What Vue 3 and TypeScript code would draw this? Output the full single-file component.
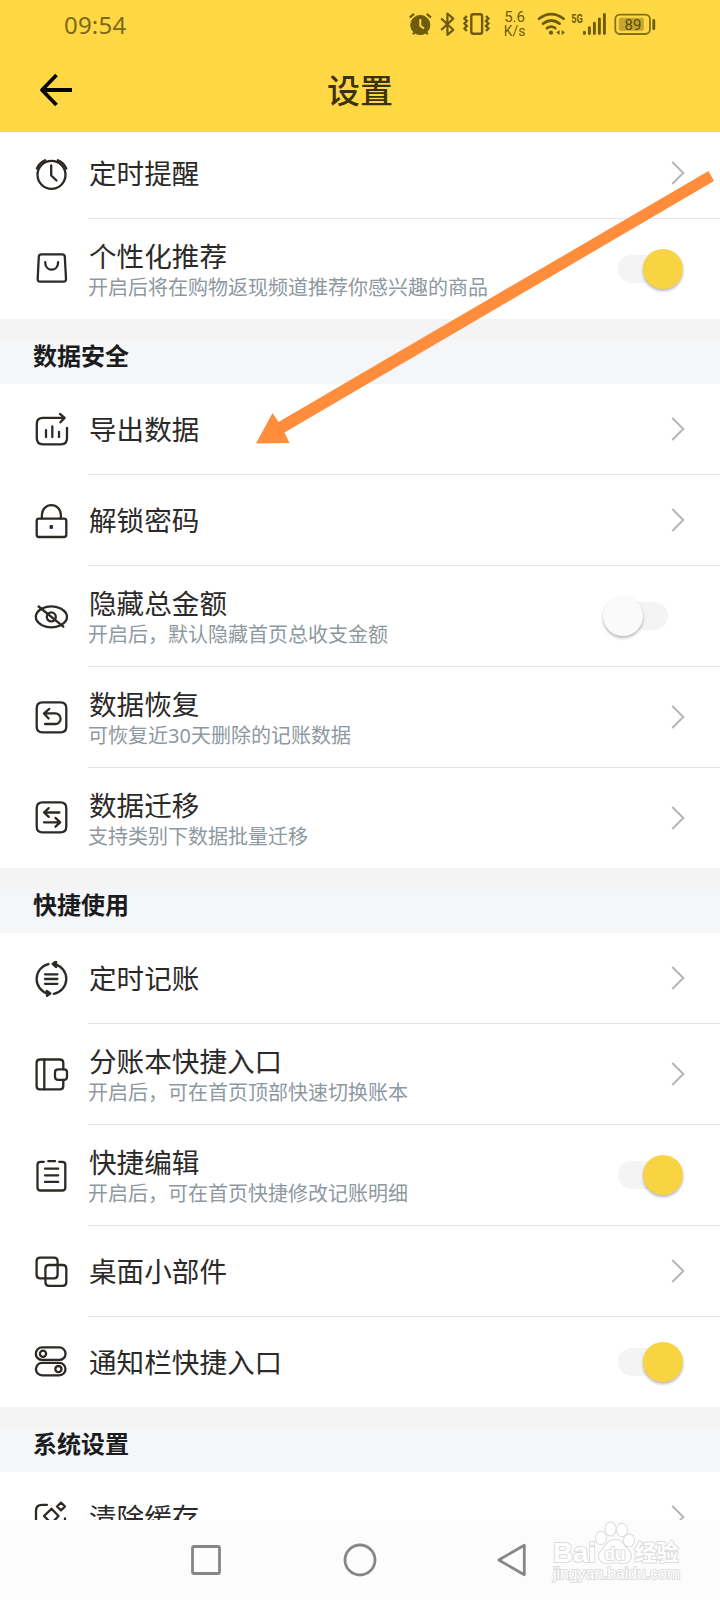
<script setup lang="ts">
type Control = 'link' | 'on' | 'off'

interface Item {
  icon: string
  title: string
  note?: string
  control: Control
}

interface Group {
  heading?: string
  items: Item[]
}

const groups: Group[] = [
  {
    items: [
      { icon: 'clock', title: '定时提醒', control: 'link' },
      { icon: 'bag', title: '个性化推荐', note: '开启后将在购物返现频道推荐你感兴趣的商品', control: 'on' },
    ],
  },
  {
    heading: '数据安全',
    items: [
      { icon: 'export', title: '导出数据', control: 'link' },
      { icon: 'lock', title: '解锁密码', control: 'link' },
      { icon: 'eye', title: '隐藏总金额', note: '开启后，默认隐藏首页总收支金额', control: 'off' },
      { icon: 'restore', title: '数据恢复', note: '可恢复近30天删除的记账数据', control: 'link' },
      { icon: 'migrate', title: '数据迁移', note: '支持类别下数据批量迁移', control: 'link' },
    ],
  },
  {
    heading: '快捷使用',
    items: [
      { icon: 'cycle', title: '定时记账', control: 'link' },
      { icon: 'wallet', title: '分账本快捷入口', note: '开启后，可在首页顶部快速切换账本', control: 'link' },
      { icon: 'clipboard', title: '快捷编辑', note: '开启后，可在首页快捷修改记账明细', control: 'on' },
      { icon: 'widgets', title: '桌面小部件', control: 'link' },
      { icon: 'toggles', title: '通知栏快捷入口', control: 'on' },
    ],
  },
  {
    heading: '系统设置',
    items: [{ icon: 'clear', title: '清除缓存', control: 'link' }],
  },
]

const icons: Record<string, string[]> = {
  clock: [
    'M3.5 19.3a14 14 0 1 0 28 0a14 14 0 1 0 -28 0',
    'M17.2 10V20L22.5 25',
    'M2.9 13Q5.2 7.4 11.2 4.8',
    'M32.3 13Q29.9 7.4 23.9 4.8',
  ],
  bag: [
    'M7.3 3.8H28.2Q30.6 3.8 30.8 6.2L32 28.2Q32.1 31.2 29.4 31.2H6.2Q3.5 31.2 3.7 28.2L4.8 6.2Q5 3.8 7.3 3.8Z',
    'M11.2 11.7C11.2 21.6 24.1 21.6 24.1 11.7',
  ],
  export: [
    'M30.2 6.4H9Q2.8 6.4 2.8 12.5V26.8Q2.8 32.8 9 32.8H27Q33 32.8 33 26.8V16.5',
    'M26 2.4L30.5 6.4L26.4 10.8',
    'M12 18.6V25.6M18.3 14.8V25.6M25 20.4V25.6',
  ],
  lock: [
    'M5 16.2H30Q32.3 16.2 32.3 18.5V32.3Q32.3 34.5 30 34.5H5Q2.7 34.5 2.7 32.3V18.5Q2.7 16.2 5 16.2Z',
    'M7.9 16V12.2A9.5 9.5 0 0 1 26.9 12.2V16',
    'M16.7 23.6V25.3L17.9 25.3V23.6Z',
  ],
  eye: [
    'M1.8 18.3Q1.8 13.5 8 10Q17.3 5.6 26.7 10Q33 13.5 33 18.3Q33 23.4 26.7 26.8Q17.3 31 8 26.8Q1.8 23.4 1.8 18.3Z',
    'M12.8 18.4a4.5 4.5 0 1 0 9 0a4.5 4.5 0 1 0 -9 0',
    'M4.6 8L29.3 28.2',
  ],
  restore: [
    'M8.5 2.9H26.5Q32.3 2.9 32.3 8.7V27Q32.3 32.9 26.5 32.9H8.5Q2.7 32.9 2.7 27V8.7Q2.7 2.9 8.5 2.9Z',
    'M15.3 9.4L10 13.9L14.6 19M10 13.9H21.3A5.2 5.2 0 0 1 21.3 24.5H11',
  ],
  migrate: [
    'M8.5 2.9H26.5Q32.3 2.9 32.3 8.7V27Q32.3 32.9 26.5 32.9H8.5Q2.7 32.9 2.7 27V8.7Q2.7 2.9 8.5 2.9Z',
    'M14.7 8.6L10 13L14.7 17.4M10 13H25.4',
    'M21.5 18.4L26.2 22.8L21.5 27.2M26.2 22.8H10',
  ],
  cycle: [
    'M14.5 3.6A15.2 15.2 0 0 0 14.2 33.2',
    'M19.8 33.3A15.2 15.2 0 0 0 20.8 3.6',
    'M22 1L18.6 3.4L22.2 6.6Z',
    'M12.8 30.4L16.3 33L13 35.4Z',
    'M11 13.8H23.4M11 18.5H23.4M11 23.3H23.4',
  ],
  wallet: [
    'M29.3 12.8V6.4Q29.3 3 25.8 3H6Q2.6 3 2.6 6.4V29.4Q2.6 32.8 6 32.8H25.8Q29.3 32.8 29.3 29.4V23.4',
    'M10.3 3V32.8',
    'M24.2 12.8H30Q33 12.8 33 15.8V20.3Q33 23.3 30 23.3H24.2Q21 23.3 21 20.3V15.8Q21 12.8 24.2 12.8Z',
  ],
  clipboard: [
    'M9.8 4.3H6.5Q3.5 4.3 3.5 7.3V30Q3.5 33 6.5 33H28.3Q31.3 33 31.3 30V7.3Q31.3 4.3 28.3 4.3H25.2',
    'M14.3 3.7H21',
    'M11 11.2H24.2M11 17.8H24.2M11 24.4H24.2',
  ],
  widgets: [
    'M6.2 4.2H20Q23.6 4.2 23.6 7.8V21.3Q23.6 24.9 20 24.9H6.2Q2.6 24.9 2.6 21.3V7.8Q2.6 4.2 6.2 4.2Z',
    'M15 11.5H28.7Q32.3 11.5 32.3 15.1V28.7Q32.3 32.3 28.7 32.3H15Q11.4 32.3 11.4 28.7V15.1Q11.4 11.5 15 11.5Z',
  ],
  toggles: [
    'M8.1 3.9H25.3A6.2 6.2 0 0 1 25.3 16.4H8.1A6.2 6.2 0 0 1 8.1 3.9Z',
    'M8.1 19.4H25.3A6.2 6.2 0 0 1 25.3 31.8H8.1A6.2 6.2 0 0 1 8.1 19.4Z',
    'M5.9 10.2a3.1 3.1 0 1 0 6.2 0a3.1 3.1 0 1 0 -6.2 0',
    'M21.3 25.6a3.1 3.1 0 1 0 6.2 0a3.1 3.1 0 1 0 -6.2 0',
  ],
  clear: [
    'M13 6.3H8Q2 6.3 2 12.3V27Q2 33 8 33H25Q31 33 31 27V20',
    'M17.5 10.3L24.5 17.5L17.5 25L10 17.5Z',
    'M27 4.1L31 8L27 11.9L23 8Z',
  ],
}
</script>

<template>
  <main class="screen">
    <header class="top">
      <div class="status">
        <span class="time">09:54</span>
        <svg class="indicators" viewBox="0 0 260 50" width="260" height="50" fill="none" stroke="#6d5c10">
          <!-- alarm -->
          <circle cx="20.3" cy="25" r="9.6" fill="#6d5c10" />
          <path d="M9.8 17.5L14 13.8M31 17.5L26.8 13.8M13 34.3L15 32M27.8 34.3L25.8 32" stroke-width="2.2" />
          <path d="M20.3 19V25.8L24 28.5" stroke="#ffd843" stroke-width="2" />
          <!-- bluetooth -->
          <path d="M41.2 18.5L53.3 29.8L47.4 34.8V13.5L53.3 18.6L41.2 30" stroke-width="2.2" stroke-linejoin="round" />
          <!-- vibration -->
          <rect x="71.3" y="14.2" width="10.8" height="19.6" rx="2" stroke-width="2.4" />
          <path d="M66.8 16L64.5 18.5L66.8 21L64.5 23.5L66.8 26L64.5 28.5L66.8 31M86 16L88.4 18.5L86 21L88.4 23.5L86 26L88.4 28.5L86 31" stroke-width="2.4" />
          <g class="glyphs" fill="#6d5c10" stroke="none">
            <text x="114.6" y="22" font-size="15" text-anchor="middle">5.6</text>
            <text x="114.6" y="35.8" font-size="15" textLength="21.5" lengthAdjust="spacingAndGlyphs" text-anchor="middle">K/s</text>
            <text x="171.3" y="22.8" font-size="12.5" font-weight="700" textLength="11.5" lengthAdjust="spacingAndGlyphs">5G</text>
          </g>
          <!-- wifi -->
          <path d="M139 18.8Q151.3 9.4 163.6 18.8M143 23.6Q151.3 17.4 159.6 23.6M147 28.2Q151.3 25 155.4 28.2" stroke-width="2.7" stroke-linecap="round" />
          <circle cx="151" cy="32.7" r="2.1" fill="#6d5c10" stroke="none" />
          <path d="M156.3 32.5L159.6 30V35ZM165 32.5L161.7 30V35Z" fill="#6d5c10" stroke="none" />
          <!-- signal -->
          <path d="M184.4 32.2V33.6M189.4 27.8V33.6M194.4 23.3V33.6M199.4 19V33.6M204.4 14.4V33.6" stroke-width="2.9" stroke-linecap="round" />
          <!-- battery -->
          <rect x="215.3" y="14.6" width="34.6" height="19.4" rx="4.5" stroke="#81701c" stroke-width="1.8" />
          <rect x="218.8" y="17.8" width="25" height="13" rx="2" fill="#c6a630" stroke="none" />
          <path d="M253.8 20.5V28.8" stroke-width="2.8" stroke-linecap="round" />
          <text class="glyphs" x="233" y="29.6" font-size="15" text-anchor="middle" fill="#5a4b0c" stroke="none">89</text>
        </svg>
      </div>
      <div class="bar">
        <svg class="back" viewBox="0 0 34 34" width="34" height="34" fill="none" stroke="#060400" stroke-width="3.8">
          <path d="M17.5 2L3 17L17.5 32M3 17H33" stroke-linejoin="round" />
        </svg>
        <h1>设置</h1>
      </div>
    </header>

    <div class="list">
      <section v-for="(group, index) in groups" :key="index">
        <h2 v-if="group.heading">{{ group.heading }}</h2>
        <div v-for="item in group.items" :key="item.title" class="row" :class="{ tall: item.note }">
          <svg class="icon" viewBox="0 0.5 36 36" width="36" height="36">
            <path v-for="d in icons[item.icon]" :key="d" :d="d" />
          </svg>
          <div class="body">
            <div class="words">
              <div class="title">{{ item.title }}</div>
              <div v-if="item.note" class="note">{{ item.note }}</div>
            </div>
            <svg v-if="item.control === 'link'" class="chevron" viewBox="0 0 14 24" width="14" height="24">
              <path d="M1.3 1L12.3 12L1.3 23" />
            </svg>
            <span v-else class="switch" :class="item.control"><i /></span>
          </div>
        </div>
      </section>
    </div>

    <nav class="nav">
      <svg viewBox="0 0 34 34" width="34" height="34"><rect x="3.5" y="3.5" width="27" height="27" rx="1.5" /></svg>
      <svg viewBox="0 0 34 34" width="34" height="34"><circle cx="17" cy="17" r="15" /></svg>
      <svg viewBox="0 0 34 34" width="34" height="34"><path d="M27.3 2.2V31.8L1.8 17Z" /></svg>
    </nav>

    <svg class="watermark" viewBox="0 0 136 70" width="136" height="70">
      <g class="brand">
        <text x="3" y="41.5" font-size="28" font-weight="700" textLength="43" lengthAdjust="spacingAndGlyphs">Bai</text>
        <ellipse cx="51" cy="18" rx="5" ry="6.2" />
        <ellipse cx="60.5" cy="9" rx="5" ry="6.5" />
        <ellipse cx="72" cy="10" rx="5" ry="6.2" />
        <ellipse cx="79" cy="20.5" rx="5" ry="6" />
        <path d="M65 20C57 20 56 27 52 30C46 36 50 44 58 43Q65 41.5 72 43C80 44 84 36 78 30C73 26 73 20 65 20Z" />
        <text x="54.5" y="40" font-size="18" font-weight="700" textLength="21" lengthAdjust="spacingAndGlyphs">du</text>
        <text class="cn" x="84.5" y="40" font-size="22" font-weight="700">经验</text>
      </g>
      <text class="site" x="3" y="59" font-size="16" textLength="127" lengthAdjust="spacingAndGlyphs">jingyan.baidu.com</text>
    </svg>

    <svg class="pointer" viewBox="0 0 460 275" width="460" height="275">
      <path d="M454.5 1L460 11L30.5 262.5L35.5 273L2 273.5L18.5 243L24.5 252Z" />
    </svg>
  </main>
</template>

<style scoped>
.screen {
  position: relative;
  display: flex;
  flex-direction: column;
  width: 720px;
  height: 1600px;
  overflow: hidden;
  background: #fff;
  color: #2b2a29;
  font-family: 'Noto Sans', 'Noto Sans CJK SC', sans-serif;
}

.top {
  flex: none;
  height: 132px;
  background: #ffd843;
}

.status {
  display: flex;
  justify-content: space-between;
  height: 50px;
  padding: 0 60px 0 64px;
}

.time {
  font-size: 24px;
  line-height: 50px;
  color: #7c6919;
  letter-spacing: 0.2px;
}

.glyphs {
  font-family: Roboto, sans-serif;
}

.bar {
  display: grid;
  grid-template-columns: 80px 1fr 80px;
  align-items: center;
  height: 80px;
}

.back {
  margin-left: 39px;
}

h1 {
  margin: 0;
  padding-bottom: 2px;
  font-family: 'Noto Sans CJK SC', sans-serif;
  font-size: 33px;
  font-weight: 500;
  line-height: 48px;
  text-align: center;
  color: #3b3212;
}

.list {
  flex: 1;
  min-height: 0;
  overflow: hidden;
}

section:first-child {
  margin-top: -4px;
}

h2 {
  box-sizing: border-box;
  height: 65px;
  margin: 0;
  padding-left: 33px;
  border-top: 21px solid #f4f4f4;
  background: #f5f6f8;
  font-family: 'Noto Sans CJK SC', sans-serif;
  font-size: 24px;
  font-weight: 700;
  line-height: 29px;
  color: #1b1c20;
}

.row {
  display: flex;
  align-items: center;
  height: 91px;
}

.row.tall {
  height: 101px;
}

.row:last-child {
  height: 90px;
}

.row.tall:last-child {
  height: 100px;
}

.icon {
  flex: none;
  margin: 0 18px 0 34px;
  fill: none;
  stroke: #2d2924;
  stroke-width: 2.3;
  stroke-linecap: round;
  stroke-linejoin: round;
}

.body {
  box-sizing: border-box;
  display: flex;
  flex: 1;
  align-items: center;
  justify-content: space-between;
  height: 100%;
  padding-right: 35px;
  border-bottom: 1px solid #e4e4e6;
}

.row:last-child .body {
  border-bottom: 0;
}

.words {
  padding: 0 0 2px 1px;
}

.title {
  font-family: 'Noto Sans CJK SC', sans-serif;
  font-size: 27.6px;
  line-height: 37px;
  white-space: nowrap;
}

.tall .words {
  padding: 2px 0 0;
}

.tall .title {
  padding-left: 1px;
  line-height: 36px;
}

.note {
  font-size: 20px;
  line-height: 30px;
  color: #8e989f;
  white-space: nowrap;
}

.chevron {
  fill: none;
  stroke: #b4b4b4;
  stroke-width: 1.9;
}

.switch {
  box-sizing: border-box;
  display: flex;
  align-items: center;
  width: 50px;
  height: 28px;
  margin-right: 17px;
  border-radius: 14px;
  background: #f4f4f4;
}

.switch i {
  flex: none;
  width: 40px;
  height: 40px;
  border-radius: 50%;
  background: #fafafa;
  box-shadow: 0 2px 3px rgba(0, 0, 0, 0.28);
}

.switch.off i {
  margin-left: -15px;
}

.switch.on i {
  margin-left: 25px;
  background: #f8d442;
}

.nav {
  display: flex;
  flex: none;
  gap: 120px;
  align-items: center;
  height: 80px;
  padding-left: 189px;
  background: #fcfcfc;
}

.nav svg {
  fill: #fdfdfd;
  stroke: #868686;
  stroke-width: 2.8;
  stroke-linejoin: round;
}

.watermark {
  position: absolute;
  top: 1520px;
  left: 550px;
  fill: #fff;
  stroke: #dcdcdc;
  stroke-width: 2;
  paint-order: stroke;
  stroke-linejoin: round;
  font-family: 'Liberation Sans', sans-serif;
}

.cn {
  font-family: 'Noto Sans CJK SC', sans-serif;
}

.pointer {
  position: absolute;
  top: 170px;
  left: 254px;
  fill: #ff8d3b;
}
</style>

<style>
body {
  margin: 0;
}
</style>
